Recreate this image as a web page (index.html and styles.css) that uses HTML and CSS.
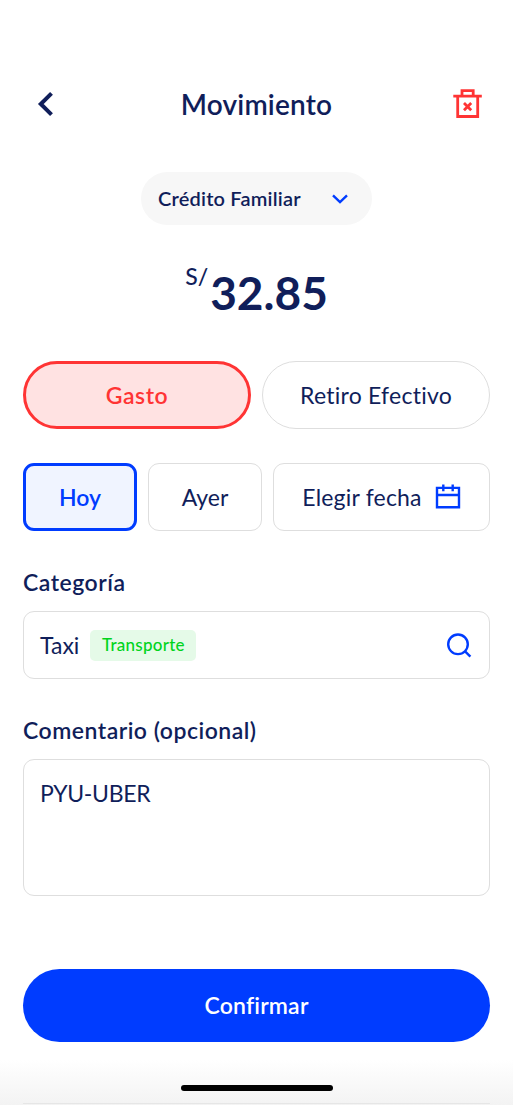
FILE: index.html
```html
<!DOCTYPE html>
<html lang="es">
<head>
    <meta charset="UTF-8">
    <meta name="viewport" content="width=device-width, initial-scale=1.0">
    <title>Movimiento</title>
    <link rel="stylesheet" href="styles.css">
</head>
<body>
<div class="screen">
    <header class="header">
        <button class="icon-button" aria-label="Volver">
            <svg width="44" height="40" viewBox="0 0 44 40" fill="none" stroke="#101e5a" stroke-width="4">
                <path d="M28.5 9.3L17.8 20L28.5 30.7"/>
            </svg>
        </button>
        <h1 class="title">Movimiento</h1>
        <button class="icon-button" aria-label="Eliminar">
            <svg width="44" height="40" viewBox="0 0 44 40" fill="none" stroke="#ff3434" stroke-width="2.8">
                <path d="M7.3 12.2H35.8M11.7 12.2V32.5H31.7V12.2M16 12V6.6H27.2V12"/>
                <path d="M18 19L25.2 26.2M25.2 19L18 26.2"/>
            </svg>
        </button>
    </header>

    <button class="account">
        <span class="account-name">Crédito Familiar</span>
        <svg width="16" height="12" viewBox="0 0 16 12" fill="none" stroke="#003cff" stroke-width="2.4">
            <path d="M1 2.3L8 9L15 2.3"/>
        </svg>
    </button>

    <div class="amount">
        <span class="currency">S/</span>
        <span class="value">32.85</span>
    </div>

    <!-- Movement type -->
    <div class="types">
        <button class="type active">Gasto</button>
        <button class="type">Retiro Efectivo</button>
    </div>

    <!-- Date -->
    <div class="dates">
        <button class="date active">Hoy</button>
        <button class="date">Ayer</button>
        <button class="date date-picker">
            <span>Elegir fecha</span>
            <svg width="26" height="26" viewBox="0 0 26 26" fill="none" stroke="#003cff" stroke-width="2.4">
                <path d="M2 3.9H24V23.2H2ZM2 11H24M8.3 0.4V7.2M17.7 0.4V7.2"/>
            </svg>
        </button>
    </div>

    <div class="label label-category">Categoría</div>
    <div class="field">
        <span class="category">Taxi</span>
        <span class="tag">Transporte</span>
        <svg class="search" width="26" height="26" viewBox="0 0 26 26" fill="none" stroke="#003cff" stroke-width="2.4">
            <circle cx="12" cy="12.3" r="9.8"/>
            <path d="M18.8 19.1L24.4 24.7"/>
        </svg>
    </div>

    <div class="label label-comment">Comentario (opcional)</div>
    <div class="comment">PYU-UBER</div>

    <button class="confirm">Confirmar</button>

    <footer class="footer">
        <div class="home-bar"></div>
    </footer>
</div>
</body>
</html>
```
FILE: styles.css
```css
* {
    box-sizing: border-box;
}
body {
    margin: 0;
    background-color: #fff;
    color: #101e5a;
    font-family: Lato, "Noto Sans", sans-serif;
    font-size: 23px;
    font-variant-ligatures: none;
    line-height: 28px;
}
button {
    margin: 0;
    padding: 0;
    border: none;
    background: none;
    color: inherit;
    font: inherit;
    font-variant-ligatures: none;
    cursor: pointer;
}
svg {
    display: block;
    flex-shrink: 0;
}
.screen {
    display: flex;
    flex-direction: column;
    height: 1105px;
    padding: 84px 23px 0;
    overflow: hidden;
    background: linear-gradient(to bottom, #fff 1060px, #f3f3f3 1105px);
}
.header {
    display: flex;
    justify-content: space-between;
    align-items: center;
    height: 40px;
}
.title {
    margin: 0;
    padding-bottom: 1px;
    font-size: 28px;
    font-weight: 600;
    letter-spacing: 0.2px;
}
.account {
    display: flex;
    justify-content: space-between;
    align-items: center;
    align-self: center;
    width: 231px;
    height: 53px;
    margin-top: 48px;
    padding: 0 24px 0 17px;
    border-radius: 27px;
    background-color: #f7f7f7;
    font-size: 20px;
    font-weight: 600;
    letter-spacing: 0.2px;
}
.account-name {
    padding-bottom: 2px;
}
.amount {
    display: flex;
    justify-content: center;
    align-items: flex-start;
    gap: 2px;
    height: 60px;
    margin-top: 38px;
}
.currency {
    font-size: 23px;
    font-weight: 500;
    line-height: 26px;
}
.value {
    font-size: 46px;
    font-weight: 700;
    line-height: 60px;
}
.types {
    display: grid;
    grid-template-columns: 1fr 1fr;
    gap: 11px;
    margin-top: 38px;
}
.type {
    height: 68px;
    border: 1px solid #dedede;
    border-radius: 34px;
    letter-spacing: 0.25px;
}
.type.active {
    border: 3px solid #ff3434;
    background-color: #ffe2e2;
    color: #ff3434;
    font-weight: 600;
    letter-spacing: 0.5px;
}
.dates {
    display: grid;
    grid-template-columns: 114px 114px 1fr;
    gap: 11px;
    margin-top: 34px;
}
.date {
    display: flex;
    justify-content: center;
    align-items: center;
    gap: 13px;
    height: 68px;
    border: 1px solid #dedede;
    border-radius: 11px;
}
.date.active {
    border: 3px solid #003cff;
    background-color: #f0f4ff;
    color: #003cff;
    font-weight: 600;
}
.date-picker {
    letter-spacing: 0.2px;
}
.label {
    font-weight: 600;
    letter-spacing: 0.5px;
}
.label-category {
    margin: 37px 0 15px;
}
.label-comment {
    margin: 37px 0 15px;
}
.field {
    display: flex;
    align-items: center;
    height: 68px;
    padding: 0 17px 0 16px;
    border: 1px solid #dedede;
    border-radius: 11px;
}
.tag {
    display: flex;
    justify-content: center;
    align-items: center;
    width: 106px;
    height: 31px;
    margin-left: 11px;
    border-radius: 5px;
    background-color: #e5fae8;
    color: #00d41c;
    font-size: 17px;
    font-weight: 500;
    letter-spacing: 0.25px;
}
.search {
    margin-left: auto;
}
.comment {
    height: 137px;
    padding: 19px 16px;
    border: 1px solid #dedede;
    border-radius: 11px;
    letter-spacing: -0.3px;
}
.confirm {
    height: 73px;
    margin-top: 73px;
    padding-bottom: 2px;
    border-radius: 37px;
    background-color: #003cff;
    color: #fff;
    font-weight: 600;
    letter-spacing: 0.2px;
}
.footer {
    display: flex;
    justify-content: center;
    height: 62px;
    padding-top: 43px;
    border-bottom: 1px solid #e6e6e6;
}
.home-bar {
    width: 152px;
    height: 6px;
    border-radius: 3px;
    background-color: #000;
}
```
